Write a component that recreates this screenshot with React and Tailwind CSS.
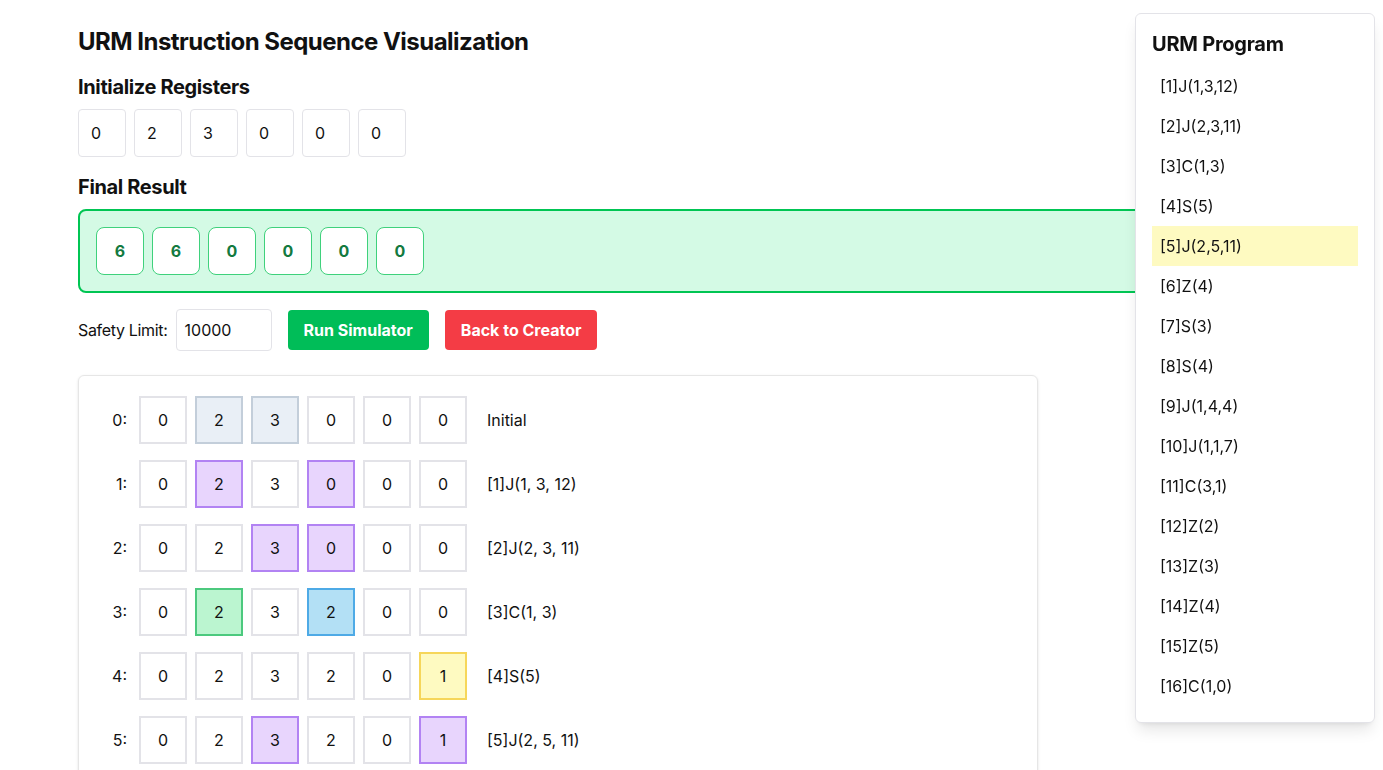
import React from "react";

const program = [
  "[1]J(1,3,12)", "[2]J(2,3,11)", "[3]C(1,3)", "[4]S(5)", "[5]J(2,5,11)", "[6]Z(4)",
  "[7]S(3)", "[8]S(4)", "[9]J(1,4,4)", "[10]J(1,1,7)", "[11]C(3,1)", "[12]Z(2)",
  "[13]Z(3)", "[14]Z(4)", "[15]Z(5)", "[16]C(1,0)",
];

const N = "border-[#e3e3e8] bg-white";
const S = "border-[#c3ceda] bg-[#e9eff6]";
const P = "border-[#b283f3] bg-[#e8d5fd]";
const G = "border-[#4cc97e] bg-[#bbf5d0]";
const B = "border-[#4eaae6] bg-[#b3e0f5]";
const Y = "border-[#f6d65a] bg-[#fefac1]";

const trace = [
  { vals: [0, 2, 3, 0, 0, 0], cls: [N, S, S, N, N, N], label: "Initial" },
  { vals: [0, 2, 3, 0, 0, 0], cls: [N, P, N, P, N, N], label: "[1]J(1, 3, 12)" },
  { vals: [0, 2, 3, 0, 0, 0], cls: [N, N, P, P, N, N], label: "[2]J(2, 3, 11)" },
  { vals: [0, 2, 3, 2, 0, 0], cls: [N, G, N, B, N, N], label: "[3]C(1, 3)" },
  { vals: [0, 2, 3, 2, 0, 1], cls: [N, N, N, N, N, Y], label: "[4]S(5)" },
  { vals: [0, 2, 3, 2, 0, 1], cls: [N, N, P, N, N, P], label: "[5]J(2, 5, 11)" },
  { vals: [0, 2, 3, 2, 0, 1], cls: [N, N, N, N, N, N], label: "[6]Z(4)" },
];

export default function App() {
  return (
    <div className="min-h-screen bg-white text-[#111] font-['Inter','Liberation_Sans',sans-serif]">
      <div className="pl-[78px] pr-[78px] pt-[26px]">
        <h1 className="text-2xl font-bold leading-8 tracking-[-0.022em]">URM Instruction Sequence Visualization</h1>
        <h2 className="mt-[15px] text-xl font-bold leading-7 tracking-[-0.018em]">Initialize Registers</h2>
        <div className="mt-2 flex gap-2">
          {[0, 2, 3, 0, 0, 0].map((v, i) => (
            <div key={i} className="flex h-12 w-12 items-center rounded border border-[#e3e3e8] pl-3 text-base">
              {v}
            </div>
          ))}
        </div>
        <h2 className="mt-4 text-xl font-bold leading-7 tracking-[-0.018em]">Final Result</h2>
        <div className="mt-2 flex gap-2 rounded-lg border-2 border-[#00c553] bg-[#d4fae5] p-4">
          {[6, 6, 0, 0, 0, 0].map((v, i) => (
            <div key={i} className="flex h-12 w-12 items-center justify-center rounded-lg border border-[#3fd17c] bg-white text-base font-bold text-[#137a3f]">
              {v}
            </div>
          ))}
        </div>
        <div className="mt-4 flex items-center">
          <span className="text-base tracking-[-0.02em]">Safety Limit:</span>
          <div className="ml-2 flex h-[42px] w-24 items-center rounded border border-[#e3e3e8] pl-2 text-base">10000</div>
          <button className="ml-4 h-10 rounded bg-[#00bd58] px-4 text-base font-bold text-white">Run Simulator</button>
          <button className="ml-4 h-10 rounded bg-[#f43c45] px-4 text-base font-bold text-white">Back to Creator</button>
        </div>
        <div className="mt-6 w-[960px] rounded-md border border-[#e6e6e6] px-5 pt-5 pb-5 shadow-sm">
          <div className="flex flex-col gap-4">
            {trace.map((row, r) => (
              <div key={r} className="flex items-center">
                <span className="w-7 text-right text-base">{r}:</span>
                <div className="ml-3 flex gap-2">
                  {row.vals.map((v, i) => (
                    <div key={i} className={`flex h-12 w-12 items-center justify-center border-2 text-base ${row.cls[i]}`}>
                      {v}
                    </div>
                  ))}
                </div>
                <span className="ml-5 text-base">{row.label}</span>
              </div>
            ))}
          </div>
        </div>
      </div>

      <div className="fixed right-2 top-[13px] w-60 rounded-md border border-[#e3e3e8] bg-white px-4 pt-4 pb-4 shadow-lg">
        <h3 className="text-xl font-bold leading-7 tracking-[-0.012em]">URM Program</h3>
        <div className="mt-2 flex flex-col">
          {program.map((p, i) => (
            <div key={i} className={`flex h-10 items-center px-2 text-base ${i === 4 ? "bg-[#fefac1]" : ""}`}>
              {p}
            </div>
          ))}
        </div>
      </div>
    </div>
  );
}
